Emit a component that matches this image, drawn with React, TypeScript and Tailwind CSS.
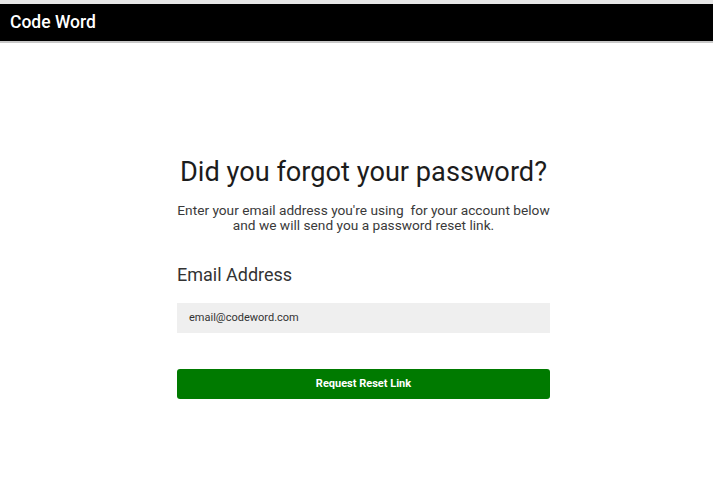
export default function App() {
  return (
    <div className="min-h-[477px] bg-white font-['Roboto',sans-serif]">
      {/* Top bar */}
      <div className="pt-[4px] bg-[#e6e6e6]">
        <header className="h-[39px] bg-black border-b-2 border-[#c8c8c8] flex items-center px-[10px]">
          <span className="text-white text-[17.5px] font-medium">Code Word</span>
        </header>
      </div>

      <main className="ml-[177px] w-[373px] pt-[113px]">
        <h1 className="text-[27.2px] leading-[32px] text-[#1c1c1c] text-center">
          Did you forgot your password?
        </h1>
        <p className="mt-[15px] text-[13.7px] leading-[15px] text-[#3a3a3a] text-center">
          Enter your email address you&apos;re using&nbsp; for your account below
          <br />
          and we will send you a password reset link.
        </p>

        <label className="block mt-[31px] text-[18px] leading-[22px] text-[#333]">
          Email Address
        </label>
        <div className="mt-[17px] h-[30px] bg-[#efefef] flex items-center px-[12px] text-[11px] text-[#333]">
          email@codeword.com
        </div>

        <button className="mt-[36px] w-full h-[30px] rounded-[3px] bg-[#007a00] text-white text-[11px] font-bold">
          Request Reset Link
        </button>
      </main>
    </div>
  )
}
